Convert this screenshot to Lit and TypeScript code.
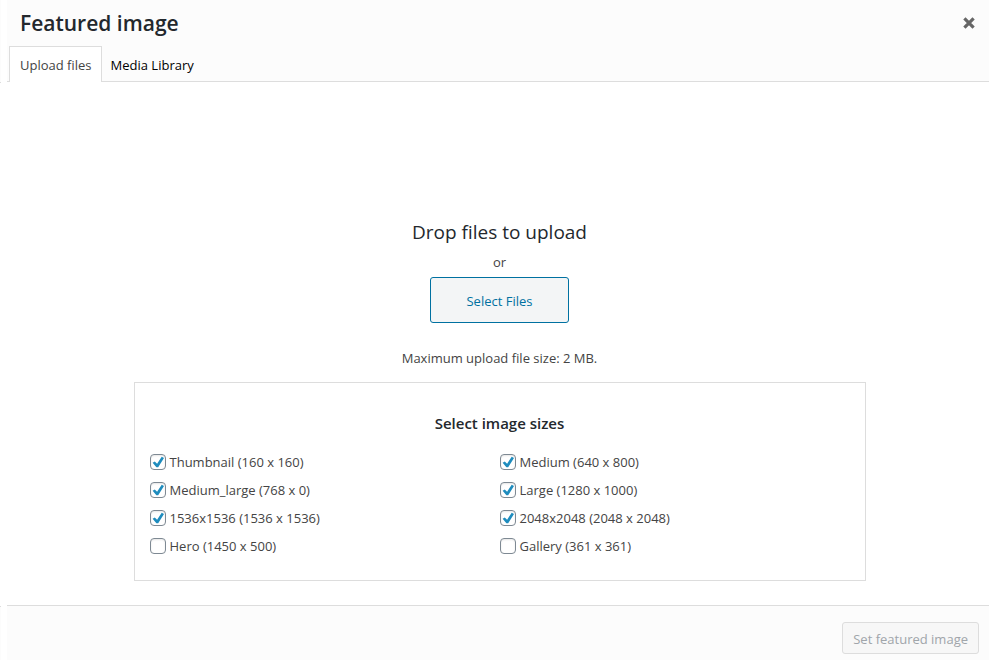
import { LitElement, html, css } from "lit";
import { customElement, state } from "lit/decorators.js";

interface ImageSize {
  id: string;
  label: string;
  checked: boolean;
}

@customElement("app-root")
export class AppRoot extends LitElement {
  static styles = css`
    :host {
      display: grid;
      grid-template-columns: 1px 1fr;
      column-gap: 6px;
      box-sizing: border-box;
      min-height: 100vh;
      padding: 0 2px 11px 0;
      background: #fff;
      color: #444;
      font: 13px/18px "Open Sans", "Noto Sans", sans-serif;
    }
    * {
      box-sizing: border-box;
    }
    button {
      font: inherit;
      cursor: pointer;
    }
    h1,
    h2,
    h3,
    p {
      margin: 0;
    }
    .edge,
    .modal {
      display: flex;
      flex-direction: column;
    }
    .edge-top,
    .edge-bottom {
      background: #fcfcfc;
    }
    .edge-top {
      height: 83px;
      border-bottom: 1px solid #ddd;
    }
    .edge-bottom {
      height: 54px;
      margin-top: auto;
      border-top: 1px solid #ddd;
    }
    .header {
      background: #fcfcfc;
    }
    .title-row {
      display: flex;
      align-items: center;
      justify-content: space-between;
      height: 46px;
      padding: 0 14px 0 13px;
    }
    h1 {
      color: #23282d;
      font-size: 21px;
      font-weight: 600;
      line-height: 46px;
    }
    .close {
      display: flex;
      padding: 0;
      border: 0;
      background: none;
      color: #666;
    }
    .tabs {
      display: flex;
      height: 36px;
      padding-left: 2px;
      border-bottom: 1px solid #ddd;
    }
    .tab {
      height: 36px;
      padding: 0 9px;
      border: 1px solid transparent;
      border-width: 1px 0 0;
      background: none;
      color: #000;
      line-height: 36px;
    }
    .tab.active {
      padding: 0 9px 0 10px;
      border-color: #ddd;
      border-width: 1px 1px 0;
      background: #fff;
      color: #444;
    }
    .content {
      display: flex;
      flex: 1;
      flex-direction: column;
      align-items: center;
      justify-content: flex-end;
      padding: 24px 0 24px 3px;
    }
    h2 {
      color: #23282d;
      font-size: 19px;
      font-weight: 400;
      line-height: 28px;
    }
    .or {
      margin: 7px 0 6px;
    }
    .select {
      height: 46px;
      padding: 2px 35px 0;
      border: 1px solid #0071a1;
      border-radius: 3px;
      background: #f3f5f6;
      color: #0071a1;
    }
    .limit {
      margin: 26px 0 15px;
    }
    .sizes {
      width: calc(100% - 247px);
      margin: 0;
      padding: 28px 15px 20px;
      border: 1px solid #ddd;
    }
    h3 {
      color: #23282d;
      font-size: 15px;
      font-weight: 600;
      line-height: 24px;
      text-align: center;
    }
    .grid {
      display: grid;
      grid-template-columns: 1fr 1fr;
      margin-top: 13px;
    }
    .option {
      display: flex;
      align-items: center;
      gap: 4px;
      height: 28px;
    }
    .box {
      display: grid;
      width: 16px;
      height: 16px;
    }
    .box > * {
      grid-area: 1 / 1;
    }
    .box input {
      width: 16px;
      height: 16px;
      margin: 0;
      appearance: none;
      border: 1px solid #7e8993;
      border-radius: 4px;
      background: #fff;
      box-shadow: inset 0 1px 2px rgba(0, 0, 0, 0.1);
    }
    .tick {
      z-index: 1;
      visibility: hidden;
      pointer-events: none;
    }
    input:checked + .tick {
      visibility: visible;
    }
    .footer {
      display: flex;
      align-items: flex-start;
      justify-content: flex-end;
      height: 55px;
      padding: 16px 10px 0;
      border-top: 1px solid #ddd;
      background: #fcfcfc;
    }
    .submit {
      height: 32px;
      padding: 2px 10px 0;
      border: 1px solid #ddd;
      border-radius: 3px;
      background: #f7f7f7;
      color: #a0a5aa;
      cursor: default;
    }
  `;

  @state() private sizes: ImageSize[] = [
    { id: "thumbnail", label: "Thumbnail (160 x 160)", checked: true },
    { id: "medium", label: "Medium (640 x 800)", checked: true },
    { id: "medium-large", label: "Medium_large (768 x 0)", checked: true },
    { id: "large", label: "Large (1280 x 1000)", checked: true },
    { id: "s1536", label: "1536x1536 (1536 x 1536)", checked: true },
    { id: "s2048", label: "2048x2048 (2048 x 2048)", checked: true },
    { id: "hero", label: "Hero (1450 x 500)", checked: false },
    { id: "gallery", label: "Gallery (361 x 361)", checked: false },
  ];

  private option(size: ImageSize) {
    return html`<label class="option" for=${size.id}>
      <span class="box">
        <input type="checkbox" id=${size.id} .checked=${size.checked} />
        <svg class="tick" width="16" height="16" viewBox="0 0 16 16" aria-hidden="true">
          <path d="M2.6 8.8 4.8 7.4 7.1 9.7 11.7 2.8 14 3.9 8.2 13.2 6.4 13.2z" fill="#1e8cbe" />
        </svg>
      </span>
      <span>${size.label}</span>
    </label>`;
  }

  render() {
    return html`
      <div class="edge" aria-hidden="true">
        <div class="edge-top"></div>
        <div class="edge-bottom"></div>
      </div>
      <div class="modal" role="dialog" aria-labelledby="title">
        <header class="header">
          <div class="title-row">
            <h1 id="title">Featured image</h1>
            <button class="close" aria-label="Close dialog">
              <svg width="13" height="12" viewBox="0 0 13 12" aria-hidden="true">
                <path d="M2.4 1.4 11.6 10.6M11.6 1.4 2.4 10.6" stroke="currentColor" stroke-width="3.2" />
              </svg>
            </button>
          </div>
          <div class="tabs" role="tablist">
            <button class="tab active" role="tab" aria-selected="true">Upload files</button>
            <button class="tab" role="tab" aria-selected="false">Media Library</button>
          </div>
        </header>
        <main class="content">
          <h2>Drop files to upload</h2>
          <p class="or">or</p>
          <button class="select">Select Files</button>
          <p class="limit">Maximum upload file size: 2 MB.</p>
          <section class="sizes">
            <h3>Select image sizes</h3>
            <div class="grid">${this.sizes.map((size) => this.option(size))}</div>
          </section>
        </main>
        <footer class="footer">
          <button class="submit" disabled>Set featured image</button>
        </footer>
      </div>
    `;
  }
}
